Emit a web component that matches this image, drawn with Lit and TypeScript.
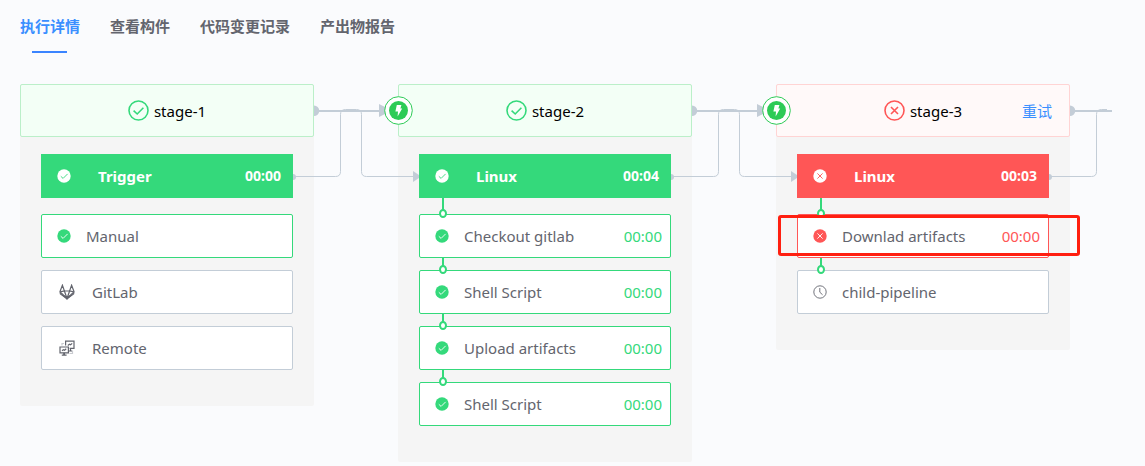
import { LitElement, html, svg, css, nothing } from "lit";
import { customElement, property, state } from "lit/decorators.js";
import { classMap } from "lit/directives/class-map.js";

type Status = "success" | "failed" | "waiting" | "idle";
type IconName = "check" | "cross" | "clock" | "gitlab" | "remote";

interface Step {
  name: string;
  icon: IconName;
  status: Status;
  time?: string;
  marked?: boolean;
}

interface Stage {
  name: string;
  status: Status;
  job: string;
  time: string;
  linked: boolean;
  retry?: boolean;
  steps: Step[];
}

const TABS = ["执行详情", "查看构件", "代码变更记录", "产出物报告"];

const STAGES: Stage[] = [
  {
    name: "stage-1",
    status: "success",
    job: "Trigger",
    time: "00:00",
    linked: false,
    steps: [
      { name: "Manual", icon: "check", status: "success" },
      { name: "GitLab", icon: "gitlab", status: "idle" },
      { name: "Remote", icon: "remote", status: "idle" },
    ],
  },
  {
    name: "stage-2",
    status: "success",
    job: "Linux",
    time: "00:04",
    linked: true,
    steps: [
      { name: "Checkout gitlab", icon: "check", status: "success", time: "00:00" },
      { name: "Shell Script", icon: "check", status: "success", time: "00:00" },
      { name: "Upload artifacts", icon: "check", status: "success", time: "00:00" },
      { name: "Shell Script", icon: "check", status: "success", time: "00:00" },
    ],
  },
  {
    name: "stage-3",
    status: "failed",
    job: "Linux",
    time: "00:03",
    linked: true,
    retry: true,
    steps: [
      { name: "Downlad artifacts", icon: "cross", status: "failed", time: "00:00", marked: true },
      { name: "child-pipeline", icon: "clock", status: "waiting" },
    ],
  },
];

const mark = (icon: IconName) =>
  icon === "cross"
    ? svg`<path class="mark" d="M4.4 4.4 9.6 9.6M9.6 4.4 4.4 9.6" />`
    : svg`<path class="mark" d="M3.8 7.3 6.1 9.4 10.6 4.9" />`;

const stepIcon = (icon: IconName) => {
  switch (icon) {
    case "clock":
      return html`<svg class="icon line clock" viewBox="0 0 14 14" aria-hidden="true">
        <circle cx="7" cy="7" r="6.2" />
        <path d="M6.8 3v4.2l2.8 2.6" />
      </svg>`;
    case "gitlab":
      return html`<svg class="icon line wide" viewBox="0 0 16 16" aria-hidden="true">
        <path d="M3.4 1.2 1 7.6 1.4 10 8 14.8 14.6 10 15 7.6 12.6 1.2 10.6 7H5.4Z" />
        <path d="M1 7.8 5.4 7 8 14.5 10.6 7 15 7.8M1.4 8.2 8 14.5 14.6 8.2" />
        <path class="solid" d="M2.4 10.6 8 12.2 13.6 10.6 8 15.4Z" />
      </svg>`;
    case "remote":
      return html`<svg class="icon line wide" viewBox="0 0 16 16" aria-hidden="true">
        <path class="faint" d="M3 5.5V3.5H5M13.5 10.5V13.5H10.5" />
        <path d="M6.6 5.5V1.2H15V8.4H10.6M11.5 8.4V11M9.8 11H13" />
        <path d="M1 7H9.4V12.8H1Z" />
        <path class="solid" d="M4.2 12.8H6V14.6H7.6V15.8H2.8V14.6H4.2Z" />
        <path d="M3 10.8 4.4 9.6 5.6 10.2 7.2 8.8M8.8 5.4 10.4 4.2 11.6 4.8 13.2 3.4" />
      </svg>`;
    default:
      return html`<svg class="icon disc" viewBox="0 0 14 14" aria-hidden="true">
        <circle cx="7" cy="7" r="6.7" />
        ${mark(icon)}
      </svg>`;
  }
};

@customElement("stage-connector")
export class StageConnector extends LitElement {
  @property({ type: Boolean }) last = false;

  static styles = css`
    :host {
      display: block;
      color: #c3cdd7;
    }
    .wires {
      display: block;
      width: 126px;
      height: 106px;
      fill: none;
      stroke: currentColor;
    }
    .thick {
      stroke-width: 2;
    }
    .solid {
      fill: currentColor;
      stroke: none;
    }
  `;

  render() {
    return html`<svg class="wires" viewBox="0 0 126 106" aria-hidden="true">
      <path class="solid" d="M21 21.5A5.2 5.2 0 0 1 21 32Z" />
      <path class="solid" d="M0 90A3 3 0 0 1 0 96Z" />
      <path class="thick" d=${this.last ? "M24 27H63" : "M24 27H90"} />
      <path d="M2 92.5H42.5Q47.5 92.5 47.5 87.5V30.5Q47.5 25.5 52.500 25.500H58" />
      ${this.last
        ? nothing
        : svg`<path d="M58 25.5H63.5Q68.5 25.5 68.5 30.5V87.5Q68.5 92.5 73.5 92.5H121" />
            <path class="solid" d="M86 20 94 24V29L86 33Z" />
            <path class="solid" d="M120 87 126 91V94L120 98Z" />`}
    </svg>`;
  }
}

@customElement("pipeline-stage")
export class PipelineStage extends LitElement {
  @property({ attribute: false }) stage!: Stage;
  @property({ type: Boolean }) last = false;

  static styles = css`
    :host {
      display: block;
      position: relative;
      flex: 0 0 294px;
      background: #f5f5f5;
      border-radius: 2px;
    }
    .success {
      --tone: #34d97b;
      --tint: #f3fff6;
      --edge: #bbefc9;
    }
    .failed {
      --tone: #ff5656;
      --tint: #fff9f9;
      --edge: #ffd4d4;
    }
    .waiting,
    .idle {
      --tone: #c3cdd7;
    }
    .head {
      box-sizing: border-box;
      display: grid;
      grid-template-columns: 1fr auto 1fr;
      align-items: center;
      height: 53px;
      padding: 0 17px;
      border: 1px solid var(--edge);
      border-radius: 2px;
      background: var(--tint);
    }
    .title {
      grid-column: 2;
      display: flex;
      align-items: center;
      gap: 5px;
      margin: 0;
      font-size: 15px;
      font-weight: 400;
      line-height: 20px;
      color: #000;
    }
    .ring {
      width: 21px;
      height: 21px;
      fill: none;
      stroke: var(--tone);
      stroke-width: 1.6;
    }
    .retry {
      justify-self: end;
      padding: 0;
      border: 0;
      background: none;
      font: inherit;
      font-size: 15px;
      line-height: 20px;
      color: #3a8fff;
      cursor: pointer;
    }
    .badge {
      position: absolute;
      z-index: 2;
      top: 12px;
      left: -14px;
      width: 29px;
      height: 29px;
    }
    .wires {
      position: absolute;
      z-index: 1;
      top: 0;
      left: calc(100% - 21px);
      pointer-events: none;
    }
    .body {
      padding: 17px 21px 36px;
    }
    .job {
      display: flex;
      align-items: center;
      height: 44px;
      padding: 0 12px 0 16px;
      background: var(--tone);
      color: #fff;
      font-size: 15px;
      font-weight: 700;
      line-height: 20px;
    }
    .job .icon {
      margin-right: 27px;
    }
    .job .disc {
      fill: #fff;
      stroke: var(--tone);
    }
    .job .time {
      font-size: 14px;
    }
    .name {
      flex: 1;
    }
    .steps {
      display: flex;
      flex-direction: column;
      gap: 12px;
      margin: 16px 0 0;
      padding: 0;
      list-style: none;
    }
    .step {
      box-sizing: border-box;
      position: relative;
      display: flex;
      align-items: center;
      height: 44px;
      padding: 0 8px 0 15px;
      border: 1px solid var(--tone);
      border-radius: 2px;
      background: #fff;
      color: #63656e;
      font-size: 15px;
      line-height: 20px;
    }
    .step .icon {
      margin-right: 15px;
    }
    .step .wide {
      margin-left: 2px;
      margin-right: 17px;
    }
    .step .time {
      color: var(--tone);
    }
    .icon {
      flex: none;
      width: 14px;
      height: 14px;
    }
    .wide {
      width: 16px;
      height: 16px;
    }
    .disc {
      fill: var(--tone);
      stroke: #fff;
    }
    .disc circle {
      stroke: none;
    }
    .mark {
      fill: none;
      stroke-width: 0.9;
    }
    .line {
      fill: none;
      stroke: #63656e;
      stroke-width: 1.2;
    }
    .clock {
      stroke-width: 0.9;
    }
    .line .solid {
      fill: #63656e;
      stroke: none;
    }
    .line .faint {
      stroke: #c9cbd0;
    }
    .linked .step::before {
      content: "";
      position: absolute;
      left: 22px;
      bottom: 100%;
      width: 2px;
      height: 13px;
      background: #34d97b;
    }
    .linked .step:first-child::before {
      height: 17px;
    }
    .linked .step::after {
      content: "";
      position: absolute;
      left: 19px;
      top: -6px;
      box-sizing: border-box;
      width: 8px;
      height: 9px;
      border: 2px solid #34d97b;
      border-radius: 50%;
      background: #fff;
    }
    .frame {
      position: absolute;
      z-index: 1;
      inset: 0 -32px 1px -20px;
      border: 3px solid #ff1f10;
      border-radius: 3px;
      pointer-events: none;
    }
  `;

  render() {
    const s = this.stage;
    return html`
      <header class=${classMap({ head: true, [s.status]: true })}>
        <h2 class="title">
          <svg class="ring" viewBox="0 0 21 21" aria-hidden="true">
            <circle cx="10.5" cy="10.5" r="9.5" />
            <path d=${s.status === "failed" ? "M7 7 14 14M14 7 7 14" : "M5.6 10.6 9.2 14 15.4 7.8"} />
          </svg>
          ${s.name}
        </h2>
        ${s.retry ? html`<button class="retry" type="button">重试</button>` : nothing}
      </header>
      ${s.linked
        ? html`<svg class="badge" viewBox="0 0 29 29" aria-hidden="true">
            <circle cx="14.5" cy="14.5" r="13.8" fill="#fff" stroke="#2dcb56" />
            <circle cx="14.5" cy="14.5" r="9.5" fill="#2dcb56" />
            <path d="M12.8 9H17.4L16.4 12.6H18.2L13.6 20.4 14 15.6H11.4Z" fill="#fff" />
          </svg>`
        : nothing}
      <stage-connector class="wires" .last=${this.last}></stage-connector>
      <div class="body">
        <div class=${classMap({ job: true, [s.status]: true })}>
          ${stepIcon(s.status === "failed" ? "cross" : "check")}
          <span class="name">${s.job}</span>
          <time class="time">${s.time}</time>
        </div>
        <ul class=${classMap({ steps: true, linked: s.linked })}>
          ${s.steps.map(
            (step) => html`<li class=${classMap({ step: true, [step.status]: true })}>
              ${stepIcon(step.icon)}
              <span class="name">${step.name}</span>
              ${step.time ? html`<time class="time">${step.time}</time>` : nothing}
              ${step.marked ? html`<span class="frame"></span>` : nothing}
            </li>`
          )}
        </ul>
      </div>
    `;
  }
}

@customElement("app-root")
export class AppRoot extends LitElement {
  @state() private current = 0;

  static styles = css`
    :host {
      display: block;
      min-height: 100vh;
      background: #fafbfd;
      font-family: "Noto Sans", "Noto Sans CJK SC", sans-serif;
    }
    .tabs {
      display: flex;
      gap: 30px;
      padding: 0 20px;
    }
    .tab {
      position: relative;
      height: 53px;
      padding: 0 0 2px;
      border: 0;
      background: none;
      font: inherit;
      font-size: 15px;
      font-weight: 700;
      line-height: 20px;
      color: #63656e;
      cursor: pointer;
    }
    .tab.active {
      color: #3a8fff;
    }
    .tab.active::after {
      content: "";
      position: absolute;
      left: 12px;
      right: 13px;
      bottom: 0;
      height: 2px;
      background: #3a84ff;
    }
    .pipeline {
      display: flex;
      align-items: flex-start;
      gap: 84px;
      padding: 31px 20px 0;
    }
  `;

  render() {
    return html`
      <nav class="tabs" role="tablist">
        ${TABS.map(
          (label, i) => html`<button
            type="button"
            role="tab"
            aria-selected=${i === this.current ? "true" : "false"}
            class=${classMap({ tab: true, active: i === this.current })}
            @click=${() => (this.current = i)}
          >${label}</button>`
        )}
      </nav>
      <main class="pipeline">
        ${STAGES.map(
          (stage, i) => html`<pipeline-stage
            .stage=${stage}
            .last=${i === STAGES.length - 1}
          ></pipeline-stage>`
        )}
      </main>
    `;
  }
}
